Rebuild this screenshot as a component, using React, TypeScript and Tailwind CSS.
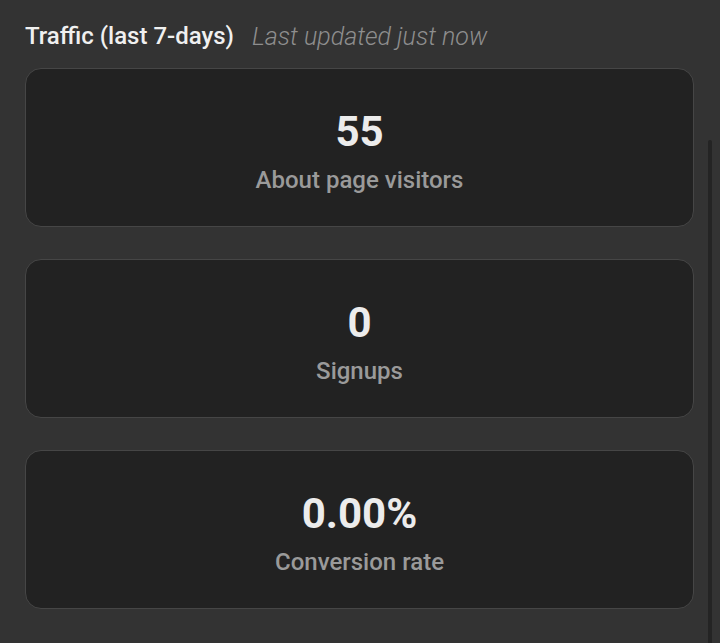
import React from "react";

const stats = [
  { value: "55", label: "About page visitors" },
  { value: "0", label: "Signups" },
  { value: "0.00%", label: "Conversion rate" },
];

export default function App() {
  return (
    <div
      className="relative h-[643px] w-[720px] overflow-hidden bg-[#333333]"
      style={{ fontFamily: "Roboto, 'Liberation Sans', sans-serif" }}
    >
      <div className="flex flex-col pl-[25px] pr-[26px] pt-[20px]">
        <div className="flex h-[32px] items-center gap-[18px]">
          <span className="text-[24px] font-medium leading-none text-[#f0f0f0]">Traffic (last 7-days)</span>
          <span className="text-[25px] font-light italic leading-none text-[#8e8e8e]">Last updated just now</span>
        </div>
        <div className="mt-[16px] flex flex-col gap-[32px]">
          {stats.map((s) => (
            <div
              key={s.label}
              className="flex h-[159px] flex-col items-center justify-center rounded-[16px] border border-[#464646] bg-[#222222] pt-[7px]"
            >
              <div className="text-[42px] font-bold leading-none text-[#ececec]">{s.value}</div>
              <div className="mt-[15px] text-[24px] font-medium leading-none text-[#9a9a9a]">{s.label}</div>
            </div>
          ))}
        </div>
      </div>
      <div className="absolute right-[8px] top-[140px] h-[520px] w-[4px] rounded-full bg-[#242424]" />
    </div>
  );
}
